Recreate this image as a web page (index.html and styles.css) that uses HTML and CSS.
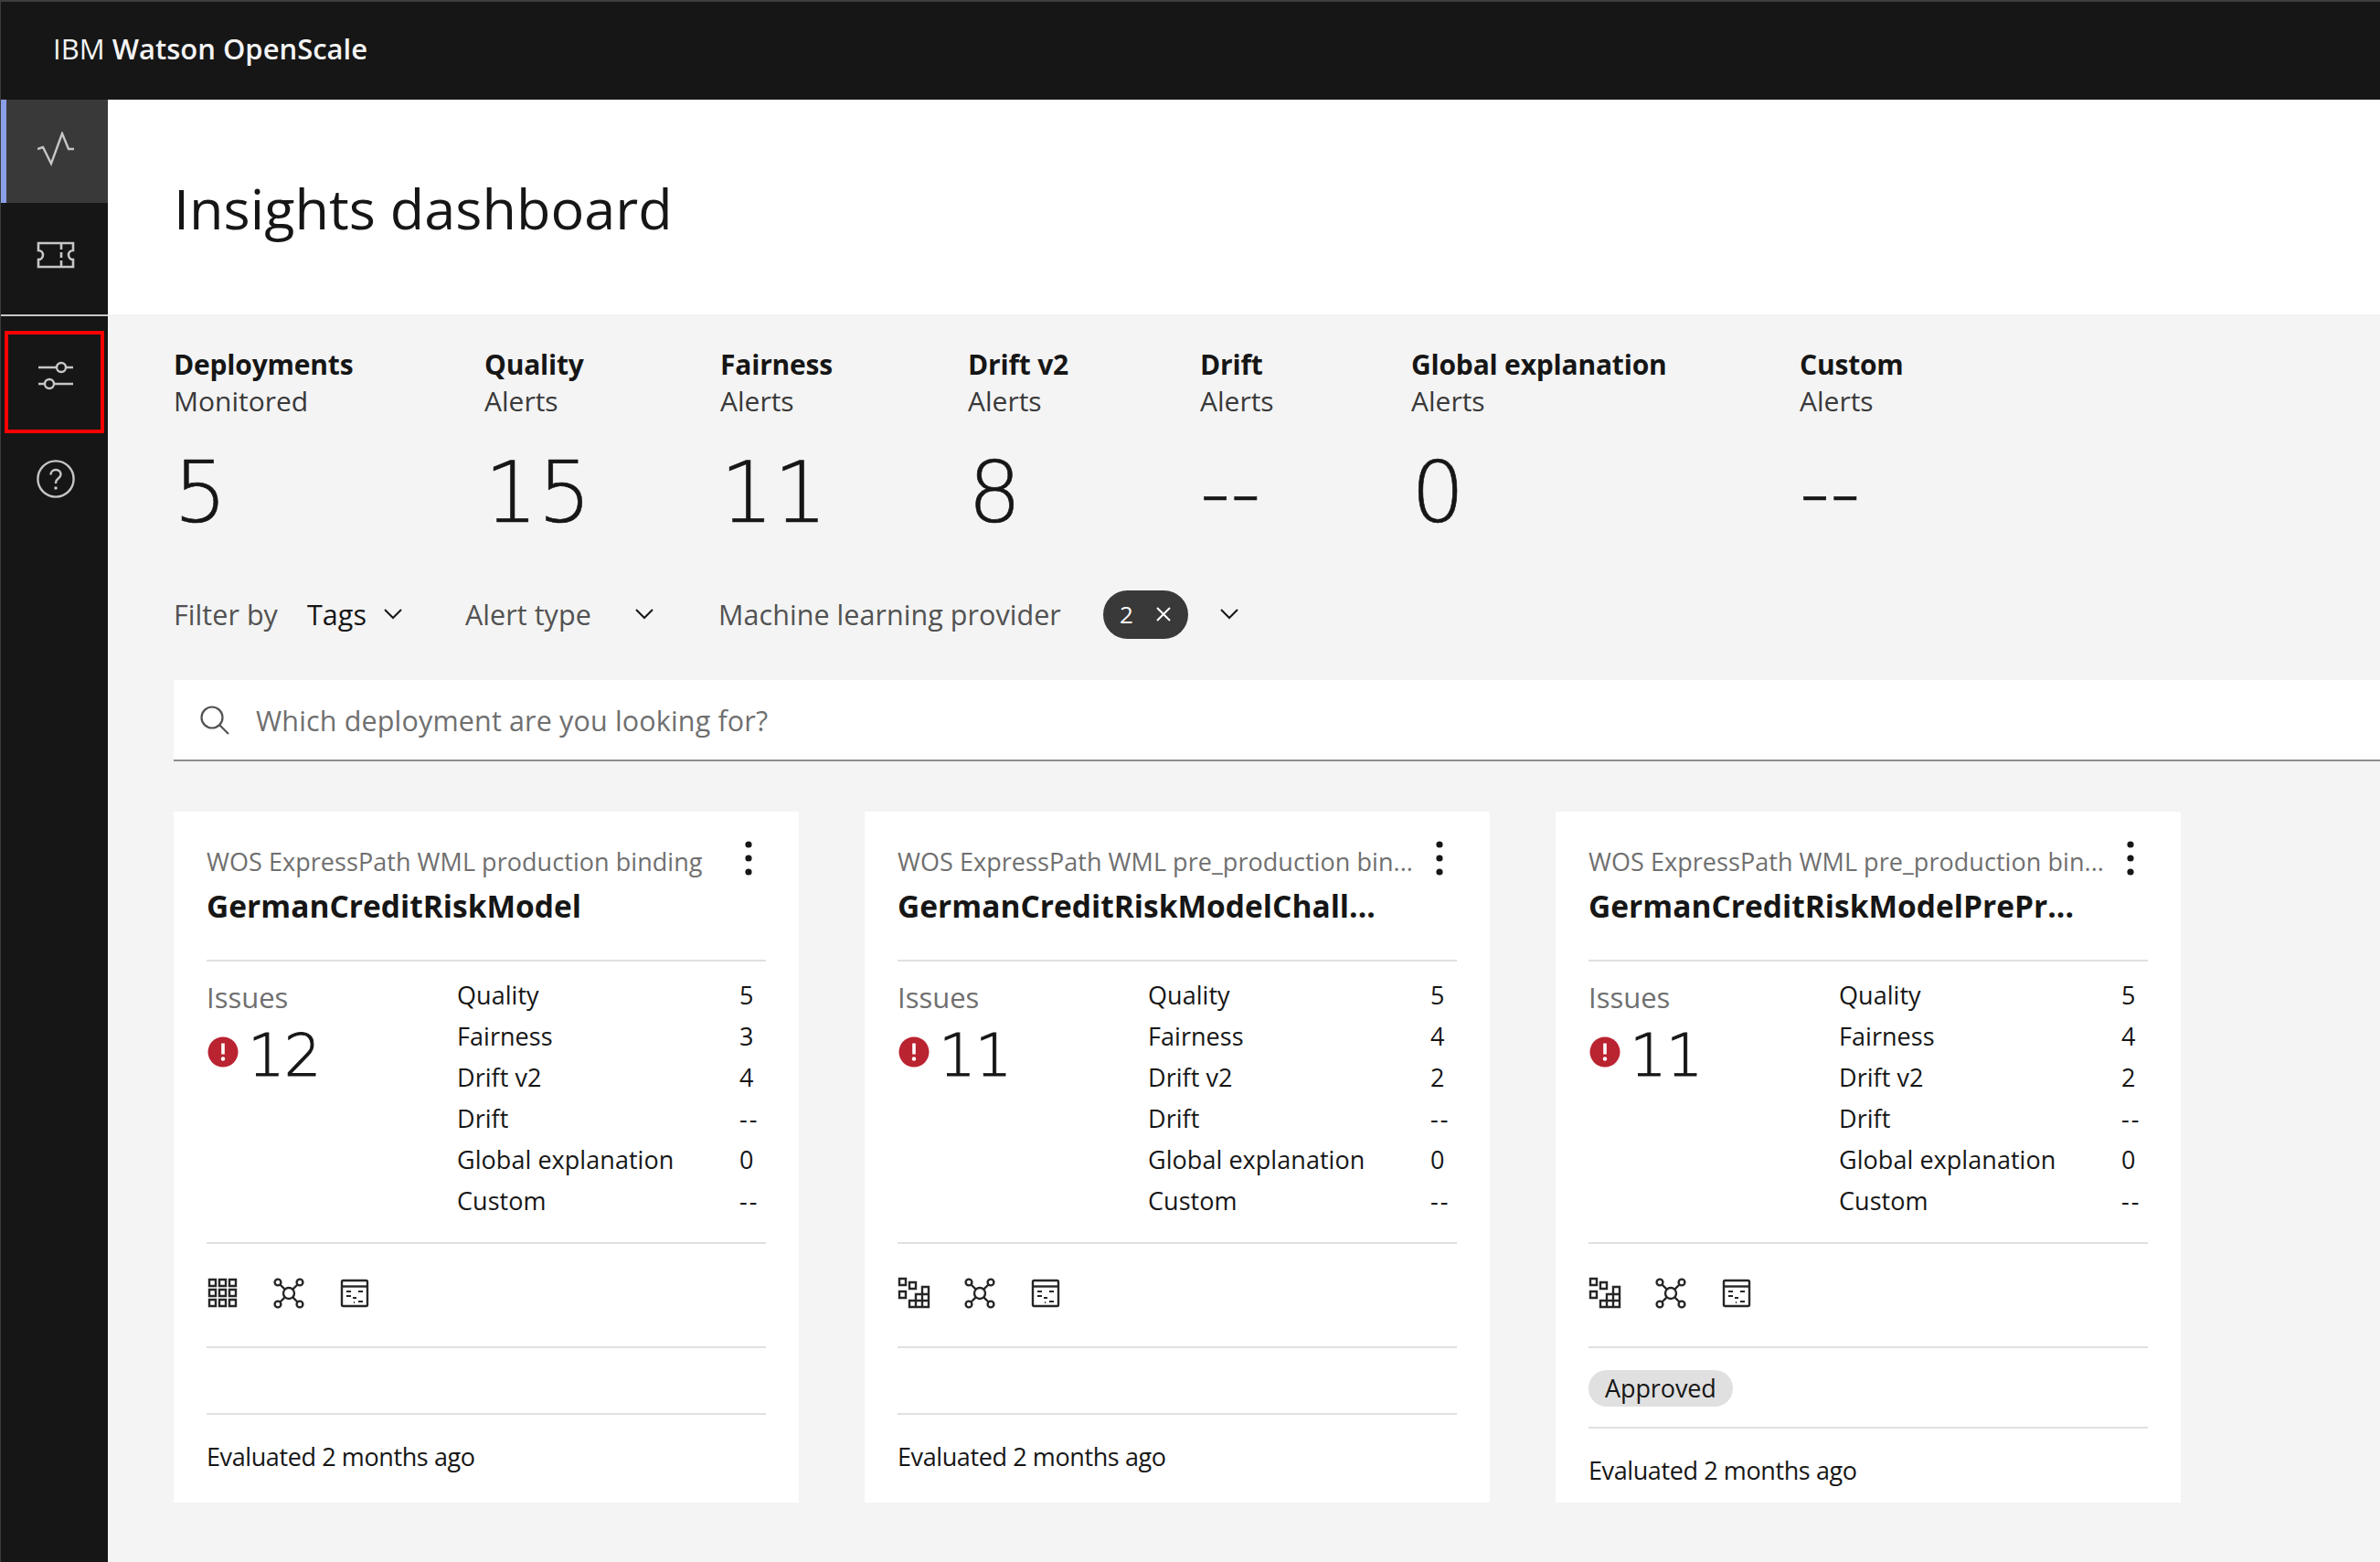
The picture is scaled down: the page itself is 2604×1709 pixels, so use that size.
FILE: index.html
```html
<!DOCTYPE html>
<html lang="en">
<head>
    <meta charset="UTF-8">
    <meta name="viewport" content="width=device-width, initial-scale=1.0">
    <title>Insights dashboard</title>
    <link rel="stylesheet" href="styles.css">
</head>
<body>
    <svg class="sprite" width="0" height="0">
        <symbol id="chevron" viewBox="0 0 24 24"><path d="M3 7l9 9 9-9" fill="none" stroke="currentColor" stroke-width="2"/></symbol>
        <symbol id="grid" viewBox="0 0 36 36" fill="none" stroke="currentColor" stroke-width="2.4">
            <path d="M3 3h7v7H3zM14 3h7v7h-7zM25 3h7v7h-7zM3 14h7v7H3zM14 14h7v7h-7zM25 14h7v7h-7zM3 25h7v7H3zM14 25h7v7h-7zM25 25h7v7h-7z"/>
        </symbol>
        <symbol id="bins" viewBox="0 0 36 36" fill="none" stroke="currentColor" stroke-width="2.4">
            <path d="M2 2h7v7H2zM13 6h7v7h-7zM2 16h7v7H2zM27 11h7v8h-7zM20 19h7v7h-7zM27 19h7v7h-7zM13 26h7v7h-7zM20 26h7v7h-7zM27 26h7v7h-7z"/>
        </symbol>
        <symbol id="network" viewBox="0 0 36 36" fill="none" stroke="currentColor" stroke-width="2.4">
            <circle cx="18" cy="18" r="6"/><circle cx="6" cy="6" r="3.4"/><circle cx="30" cy="6" r="3.4"/><circle cx="6" cy="30" r="3.4"/><circle cx="30" cy="30" r="3.4"/>
            <path d="M8.5 8.5l5.2 5.2M27.5 8.5l-5.2 5.2M8.5 27.5l5.2-5.2M27.5 27.5l-5.2-5.2"/>
        </symbol>
        <symbol id="table" viewBox="0 0 36 36" fill="none" stroke="currentColor" stroke-width="2.4">
            <rect x="4" y="4" width="28" height="28" rx="1.5"/><path d="M4 10.5h28"/>
            <path d="M9 16h5M22 16h5M9 21h5M16 23h4M18 28h-1M22 27h5" stroke-width="2"/>
        </symbol>
        <symbol id="alert" viewBox="0 0 34 34">
            <circle cx="17" cy="17" r="16.5" fill="#ba2330"/>
            <path d="M15.2 7.5h3.6v12h-3.6z" fill="#fff"/><circle cx="17" cy="24.5" r="2.2" fill="#fff"/>
        </symbol>
        <symbol id="kebab" viewBox="0 0 14 44" fill="#161616">
            <circle cx="7" cy="7" r="3.6"/><circle cx="7" cy="22" r="3.6"/><circle cx="7" cy="37" r="3.6"/>
        </symbol>
    </svg>

    <header class="topbar">
        <span class="brand">IBM <b>Watson OpenScale</b></span>
    </header>

    <div class="shell">
        <nav class="sidenav">
            <a class="nav-item nav-item-active">
                <svg width="40" height="38" viewBox="0 0 40 38" fill="none" stroke="currentColor" stroke-width="2.4">
                    <path d="M0 19l6-2 9 18 12-33 7 17h6"/>
                </svg>
            </a>
            <a class="nav-item nav-item-ticket">
                <svg width="42" height="30" viewBox="0 0 42 30" fill="none" stroke="currentColor" stroke-width="2.6">
                    <path d="M2 2h38v8a5 5 0 0 0 0 10v8H2v-8a5 5 0 0 0 0-10z"/>
                    <path d="M27 2v7M27 12v6M27 21v7"/>
                </svg>
            </a>
            <div class="nav-divider"></div>
            <a class="nav-item nav-item-marked">
                <svg width="38" height="36" viewBox="0 0 38 36" fill="none" stroke="currentColor" stroke-width="2.4">
                    <path d="M0 9h20M30 9h8M0 27h6M18 27h20"/>
                    <circle cx="25" cy="9" r="5"/><circle cx="12" cy="27" r="5"/>
                </svg>
            </a>
            <a class="nav-item nav-item-help">
                <svg width="42" height="42" viewBox="0 0 42 42" fill="none" stroke="currentColor" stroke-width="2.4">
                    <circle cx="21" cy="21" r="19.6"/>
                    <path d="M15.5 16.5c0-3.3 2.4-5.5 5.6-5.5s5.4 2 5.4 5c0 4.6-5.5 4.4-5.5 9v1"/>
                    <circle cx="21" cy="31" r="1.8" fill="currentColor" stroke="none"/>
                </svg>
            </a>
        </nav>

        <main class="main">
            <div class="title-band">
                <h1>Insights dashboard</h1>
            </div>

            <div class="content">
                <section class="stats">
                    <div><h2>Deployments</h2><p>Monitored</p><div class="stat-value">5</div></div>
                    <div><h2>Quality</h2><p>Alerts</p><div class="stat-value">15</div></div>
                    <div><h2>Fairness</h2><p>Alerts</p><div class="stat-value">11</div></div>
                    <div><h2>Drift v2</h2><p>Alerts</p><div class="stat-value">8</div></div>
                    <div><h2>Drift</h2><p>Alerts</p><div class="stat-value">--</div></div>
                    <div><h2>Global explanation</h2><p>Alerts</p><div class="stat-value">0</div></div>
                    <div><h2>Custom</h2><p>Alerts</p><div class="stat-value">--</div></div>
                </section>

                <section class="filters">
                    <span class="filter-label">Filter by</span>
                    <span class="filter filter-tags">Tags <svg class="chev"><use href="#chevron"/></svg></span>
                    <span class="filter filter-alert">Alert type <svg class="chev"><use href="#chevron"/></svg></span>
                    <span class="filter">Machine learning provider</span>
                    <span class="chip">2
                        <svg width="18" height="18" viewBox="0 0 18 18" fill="none" stroke="currentColor" stroke-width="2"><path d="M2 2l14 14M16 2L2 16"/></svg>
                    </span>
                    <svg class="chev"><use href="#chevron"/></svg>
                </section>

                <div class="search">
                    <svg width="34" height="34" viewBox="0 0 34 34" fill="none" stroke="currentColor" stroke-width="2.2">
                        <circle cx="14" cy="14" r="11.5"/><path d="M22 22l10 10"/>
                    </svg>
                    <span>Which deployment are you looking for?</span>
                </div>

                <section class="cards">
                    <article class="card">
                        <div class="card-head">
                            <div class="card-top">
                                <span class="card-sub">WOS ExpressPath WML production binding</span>
                                <svg class="kebab"><use href="#kebab"/></svg>
                            </div>
                            <h3>GermanCreditRiskModel</h3>
                        </div>
                        <div class="card-body">
                            <div class="issues">
                                <div class="issues-label">Issues</div>
                                <div class="issues-count"><svg class="alert"><use href="#alert"/></svg>12</div>
                            </div>
                            <dl class="issue-list">
                                <dt>Quality</dt><dd>5</dd>
                                <dt>Fairness</dt><dd>3</dd>
                                <dt>Drift v2</dt><dd>4</dd>
                                <dt>Drift</dt><dd>--</dd>
                                <dt>Global explanation</dt><dd>0</dd>
                                <dt>Custom</dt><dd>--</dd>
                            </dl>
                        </div>
                        <div class="card-icons">
                            <svg class="tool"><use href="#grid"/></svg>
                            <svg class="tool"><use href="#network"/></svg>
                            <svg class="tool"><use href="#table"/></svg>
                        </div>
                        <div class="card-tags"></div>
                        <div class="card-foot">Evaluated 2 months ago</div>
                    </article>

                    <article class="card">
                        <div class="card-head">
                            <div class="card-top">
                                <span class="card-sub">WOS ExpressPath WML pre_production bin...</span>
                                <svg class="kebab"><use href="#kebab"/></svg>
                            </div>
                            <h3>GermanCreditRiskModelChall...</h3>
                        </div>
                        <div class="card-body">
                            <div class="issues">
                                <div class="issues-label">Issues</div>
                                <div class="issues-count"><svg class="alert"><use href="#alert"/></svg>11</div>
                            </div>
                            <dl class="issue-list">
                                <dt>Quality</dt><dd>5</dd>
                                <dt>Fairness</dt><dd>4</dd>
                                <dt>Drift v2</dt><dd>2</dd>
                                <dt>Drift</dt><dd>--</dd>
                                <dt>Global explanation</dt><dd>0</dd>
                                <dt>Custom</dt><dd>--</dd>
                            </dl>
                        </div>
                        <div class="card-icons">
                            <svg class="tool"><use href="#bins"/></svg>
                            <svg class="tool"><use href="#network"/></svg>
                            <svg class="tool"><use href="#table"/></svg>
                        </div>
                        <div class="card-tags"></div>
                        <div class="card-foot">Evaluated 2 months ago</div>
                    </article>

                    <article class="card">
                        <div class="card-head">
                            <div class="card-top">
                                <span class="card-sub">WOS ExpressPath WML pre_production bin...</span>
                                <svg class="kebab"><use href="#kebab"/></svg>
                            </div>
                            <h3>GermanCreditRiskModelPrePr...</h3>
                        </div>
                        <div class="card-body">
                            <div class="issues">
                                <div class="issues-label">Issues</div>
                                <div class="issues-count"><svg class="alert"><use href="#alert"/></svg>11</div>
                            </div>
                            <dl class="issue-list">
                                <dt>Quality</dt><dd>5</dd>
                                <dt>Fairness</dt><dd>4</dd>
                                <dt>Drift v2</dt><dd>2</dd>
                                <dt>Drift</dt><dd>--</dd>
                                <dt>Global explanation</dt><dd>0</dd>
                                <dt>Custom</dt><dd>--</dd>
                            </dl>
                        </div>
                        <div class="card-icons">
                            <svg class="tool"><use href="#bins"/></svg>
                            <svg class="tool"><use href="#network"/></svg>
                            <svg class="tool"><use href="#table"/></svg>
                        </div>
                        <div class="card-tags card-tags-filled"><span class="tag">Approved</span></div>
                        <div class="card-foot">Evaluated 2 months ago</div>
                    </article>
                </section>
            </div>
        </main>
    </div>
</body>
</html>
```

FILE: styles.css
```css
* {
    box-sizing: border-box;
    padding: 0;
    margin: 0;
}

:root {
    --ink: #161616;
    --ink-soft: #525252;
    --ink-mute: #6f6f6f;
    --rule: #e0e0e0;
    --bg: #f4f4f4;
    --nav-icon: #c6c6c6;
}

html, body {
    height: 100%;
    overflow: hidden;
}

body {
    font-family: "Open Sans", "Noto Sans", sans-serif;
    color: var(--ink);
    background-color: var(--bg);
    display: flex;
    flex-direction: column;
}

.sprite {
    display: block;
    position: absolute;
}

.topbar {
    height: 109px;
    flex: none;
    background-color: var(--ink);
    border-top: 2px solid #3d3d3d;
    border-left: 1px solid #3d3d3d;
    padding: 0 0 6px 57px;
    display: flex;
    align-items: center;
    color: #f4f4f4;
    font-size: 31px;
}

.brand b {
    font-weight: 600;
}

.shell {
    flex: 1;
    display: flex;
    min-height: 0;
}

.sidenav {
    width: 118px;
    flex: none;
    background-color: var(--ink);
    border-left: 1px solid #3d3d3d;
    color: var(--nav-icon);
    display: flex;
    flex-direction: column;
}

.nav-item {
    display: flex;
    align-items: center;
    justify-content: center;
    height: 113px;
    padding-left: 3px;
}

.nav-item-active {
    background-color: #393939;
    border-left: 6px solid #8a9fe8;
    padding: 0 6px 6px 0;
    height: 113px;
}

.nav-item-active svg {
    margin-left: 3px;
}

.nav-item-ticket {
    height: 122px;
    padding-bottom: 8px;
}

.nav-divider {
    height: 2px;
    background-color: #c6c6c6;
}

.nav-item-marked {
    width: 109px;
    height: 112px;
    margin: 16px 0 0 4px;
    border: 4px solid #f00;
    padding-bottom: 14px;
}

.nav-item-help {
    height: 113px;
    margin-top: -7px;
}

.main {
    flex: 1;
    min-width: 0;
}

.title-band {
    height: 235px;
    background-color: #fff;
    padding-left: 72px;
    display: flex;
    align-items: center;
}

h1 {
    font-size: 61.2px;
    font-weight: 400;
    margin-top: 1px;
}

.content {
    padding: 35px 0 0 72px;
}

.stats {
    display: grid;
    grid-template-columns: 340px 258px 271px 254px 231px 425px auto;
}

.stats h2 {
    font-size: 30px;
    line-height: 40px;
    font-weight: 700;
    letter-spacing: -0.2px;
}

.stats p {
    font-size: 30px;
    line-height: 40px;
    color: #393939;
}

.stat-value {
    font-family: "DejaVu Sans", sans-serif;
    font-weight: 200;
    font-size: 92px;
    line-height: 110px;
    margin-top: 26px;
    -webkit-text-stroke: 0.6px var(--ink);
}

.filters {
    display: flex;
    align-items: center;
    height: 66px;
    margin-top: 44px;
    color: var(--ink-soft);
    font-size: 30.5px;
    letter-spacing: 0.05px;
}

.filter-label {
    width: 146px;
}

.filter {
    display: inline-flex;
    align-items: center;
}

.filter-tags {
    color: var(--ink);
    width: 173px;
}

.filter-tags .chev {
    margin-left: 17px;
}

.filter-alert {
    width: 277px;
}

.filter-alert .chev {
    margin-left: 46px;
}

.chev {
    width: 24px;
    height: 24px;
    color: var(--ink);
}

.filters > .chev {
    margin-left: 33px;
}

.chip {
    margin-left: 46px;
    width: 93px;
    height: 53px;
    border-radius: 27px;
    background-color: #393939;
    color: #fff;
    display: flex;
    align-items: center;
    justify-content: space-between;
    padding: 0 18px 0 18px;
    font-size: 26px;
}

.search {
    margin-top: 39px;
    height: 89px;
    background-color: #fff;
    border-bottom: 2px solid #8d8d8d;
    padding-left: 28px;
    display: flex;
    align-items: center;
    gap: 28px;
    color: var(--ink-mute);
    font-size: 30.5px;
    letter-spacing: 0.15px;
}

.search svg {
    color: var(--ink-soft);
}

.cards {
    margin-top: 55px;
    display: flex;
    gap: 72px;
}

.card {
    width: 684px;
    height: 756px;
    background-color: #fff;
    padding: 0 36px;
}

.card-head {
    height: 164px;
    border-bottom: 2px solid var(--rule);
    padding-top: 32px;
}

.card-top {
    display: flex;
    justify-content: space-between;
    align-items: center;
    height: 44px;
}

.card-sub {
    font-size: 27px;
    color: var(--ink-mute);
    letter-spacing: 0.05px;
    white-space: nowrap;
}

.kebab {
    width: 14px;
    height: 44px;
    flex: none;
    margin-right: 12px;
    margin-top: -6px;
}

h3 {
    font-size: 33.5px;
    font-weight: 700;
    line-height: 46px;
    margin-top: 4px;
    white-space: nowrap;
}

.card-body {
    height: 309px;
    border-bottom: 2px solid var(--rule);
    display: flex;
    padding-top: 17px;
}

.issues {
    width: 274px;
    flex: none;
}

.issues-label {
    font-size: 31px;
    line-height: 45px;
    color: var(--ink-mute);
}

.issues-count {
    display: flex;
    align-items: center;
    gap: 10px;
    font-family: "DejaVu Sans", sans-serif;
    font-weight: 200;
    font-size: 64px;
    line-height: 78px;
    margin-top: 2px;
    letter-spacing: -1px;
    -webkit-text-stroke: 0.9px var(--ink);
}

.alert {
    width: 34px;
    height: 34px;
    margin-left: 1px;
    margin-top: -8px;
}

.issue-list {
    flex: 1;
    display: grid;
    grid-template-columns: 309px auto;
    grid-auto-rows: 45px;
    align-items: center;
    align-content: start;
    font-size: 27px;
    letter-spacing: 0.05px;
    margin-top: -3px;
}

.issue-list dd {
    letter-spacing: 2px;
}

.card-icons {
    height: 114px;
    border-bottom: 2px solid var(--rule);
    display: flex;
    align-items: center;
    gap: 36px;
    padding-bottom: 4px;
}

.tool {
    width: 36px;
    height: 36px;
    color: #262626;
}

.card-tags {
    height: 73px;
    border-bottom: 2px solid var(--rule);
}

.card-tags-filled {
    height: 88px;
    padding-top: 24px;
}

.tag {
    display: inline-block;
    height: 40px;
    line-height: 40px;
    padding: 0 18px;
    border-radius: 20px;
    background-color: var(--rule);
    font-size: 27px;
    letter-spacing: -0.1px;
}

.card-foot {
    font-size: 27px;
    line-height: 46px;
    padding-top: 23px;
    letter-spacing: -0.4px;
}
```
